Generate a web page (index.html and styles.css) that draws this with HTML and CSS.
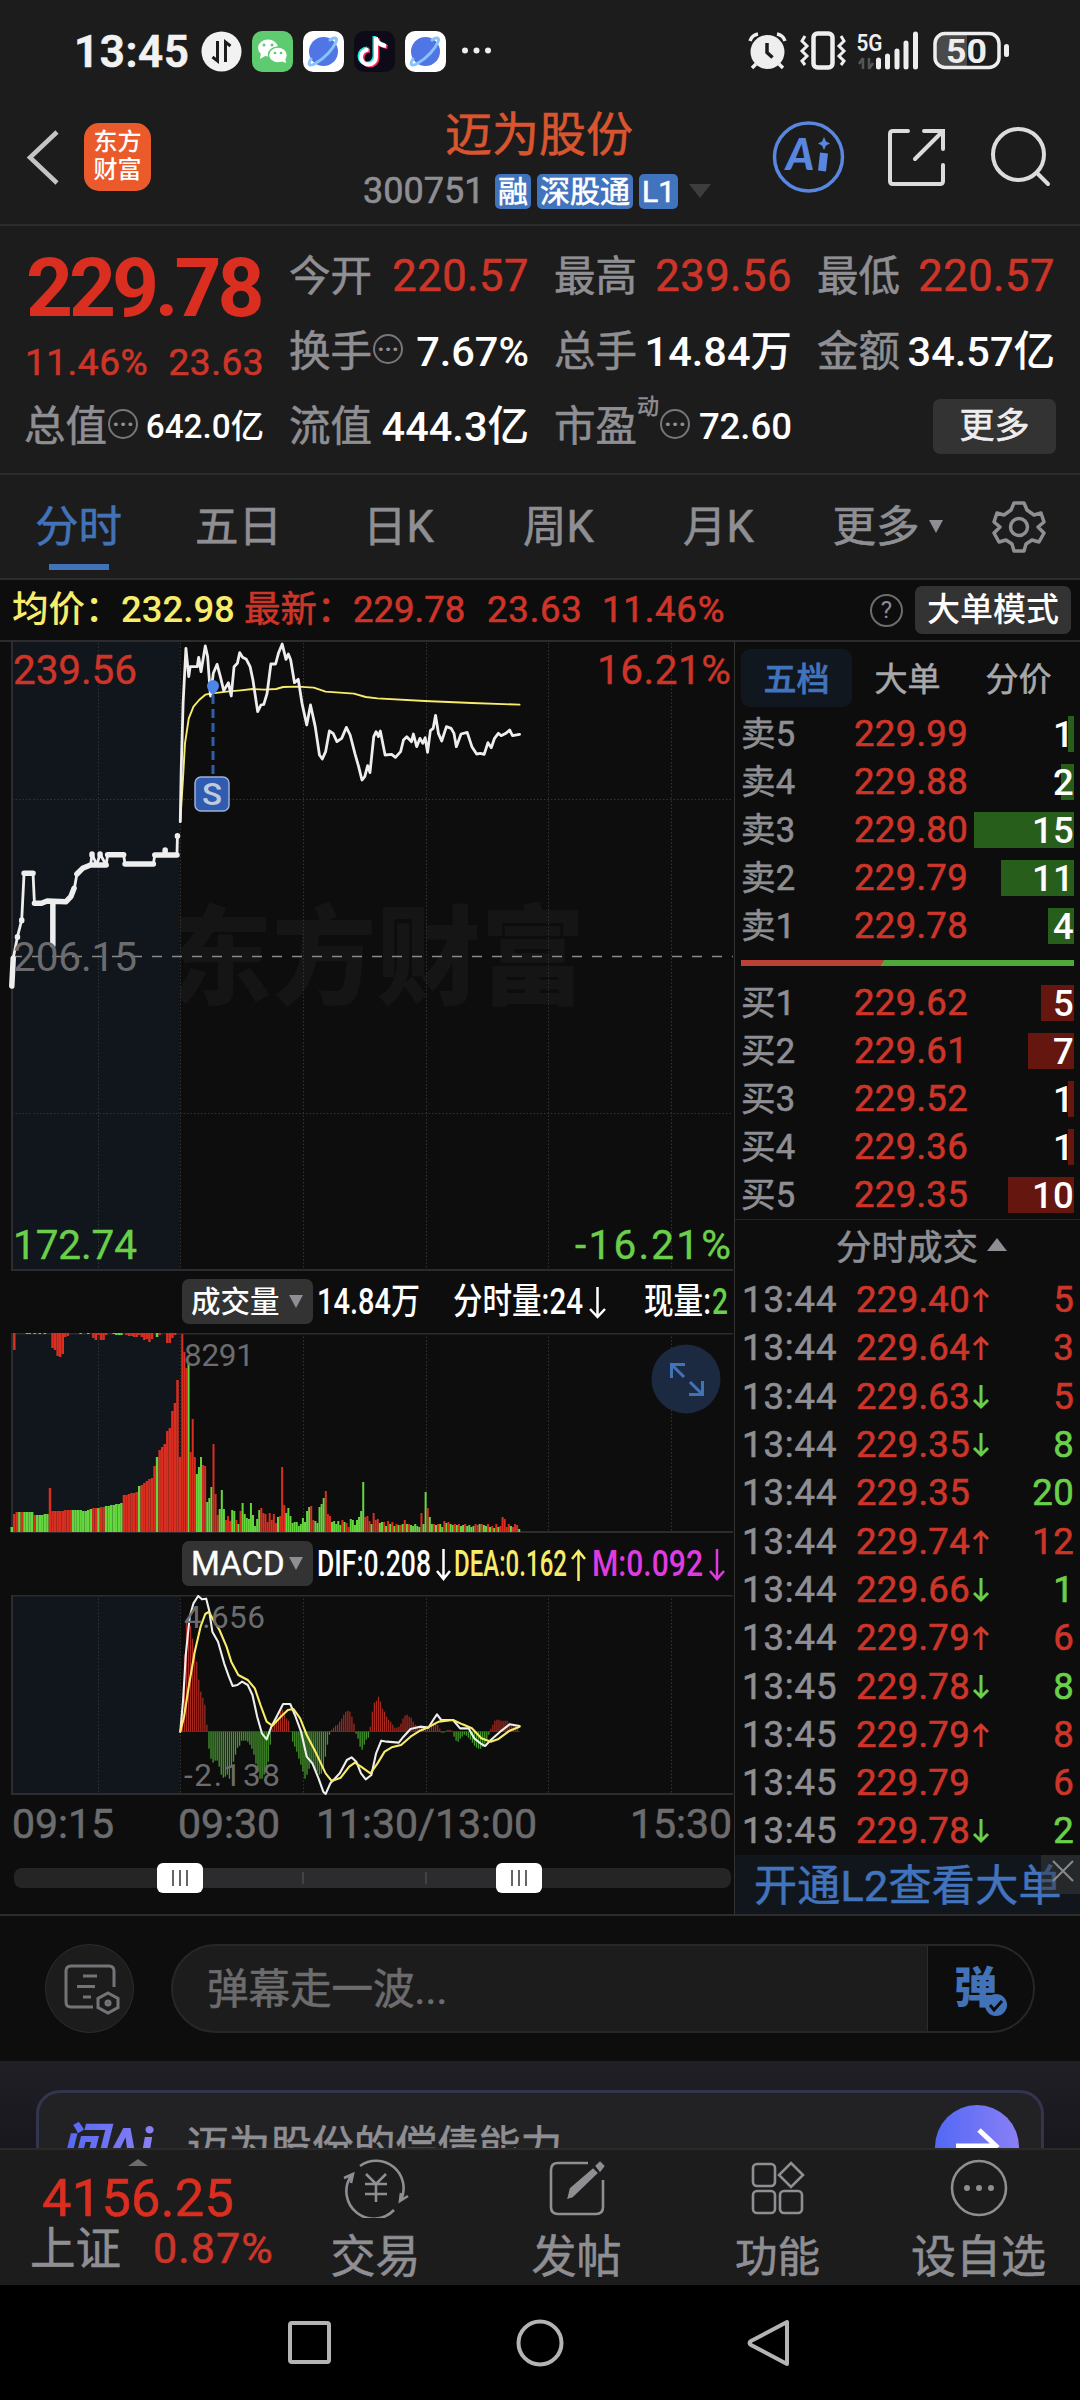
FILE: index.html
```html
<!DOCTYPE html>
<html lang="zh-CN">
<head>
    <meta charset="UTF-8">
    <title>迈为股份 300751</title>
    <link rel="stylesheet" href="styles.css">
</head>
<body>
    <!-- status bar -->
    <div class="status">
        <span class="clock">13:45</span>
        <svg class="apps" width="300" height="44" viewBox="200 30 300 44">
            <circle cx="221.500" cy="51.500" r="20" fill="#f2f2f2"/>
            <path d="M217.500 41v20l-5-4M225.500 62V42l5 4" stroke="#1c1c1c" stroke-width="3" fill="none"/>
            <rect x="252" y="31" width="41" height="41" rx="10" fill="#5fcb71"/>
            <ellipse cx="268" cy="48" rx="10" ry="8.500" fill="#fff"/>
            <path d="M261 53l-1 6 7-4z" fill="#fff"/>
            <ellipse cx="278" cy="55" rx="9.500" ry="8" fill="#fff" stroke="#5fcb71" stroke-width="1.500"/>
            <path d="M281 61l5 2-1-6z" fill="#fff"/>
            <g fill="#5fcb71"><circle cx="264" cy="45" r="1.500"/><circle cx="272" cy="45" r="1.500"/><circle cx="275" cy="53" r="1.300"/><circle cx="281" cy="53" r="1.300"/></g>
            <g id="planet">
                <rect x="303" y="31" width="41" height="41" rx="10" fill="#fff"/>
                <circle cx="323.500" cy="51.500" r="14.500" fill="#4f76e4"/>
                <path d="M311 59c-4 6-1 8 5 4 9-5 17-14 20-21 2-5-2-5-6-2" stroke="#8ac3fb" stroke-width="3" fill="none" stroke-linecap="round"/>
            </g>
            <rect x="354" y="31" width="41" height="41" rx="10" fill="#0d0b17"/>
            <g fill="none" stroke-width="4">
                <path d="M376 37v20a7.500 7.500 0 1 1-7.500-7.500M376 38c1 5 4 7 10 8" stroke="#25e5e0" transform="translate(-1.500 -1)"/>
                <path d="M376 37v20a7.500 7.500 0 1 1-7.500-7.500M376 38c1 5 4 7 10 8" stroke="#f43560" transform="translate(1.500 1)"/>
                <path d="M376 37v20a7.500 7.500 0 1 1-7.500-7.500M376 38c1 5 4 7 10 8" stroke="#fff"/>
            </g>
            <use href="#planet" x="102"/>
            <g fill="#eee"><circle cx="465" cy="50.500" r="3"/><circle cx="476.500" cy="50.500" r="3"/><circle cx="488" cy="50.500" r="3"/></g>
        </svg>
        <svg class="signals" width="264" height="44" viewBox="747 30 264 44">
            <circle cx="767.500" cy="52" r="17" fill="#eee"/>
            <path d="M767 43v9.500l5.500 5" stroke="#1c1c1c" stroke-width="3.500" fill="none"/>
            <path d="M750 41q2-6 8-7M785 41q-2-6-8-7M756 64l-4 4M779 64l4 4" stroke="#eee" stroke-width="3.500" fill="none"/>
            <rect x="813.500" y="33.500" width="19" height="34" rx="4" stroke="#eee" stroke-width="4.500" fill="none"/>
            <path d="M805 36l-3 5 5 5-5 5 5 5-5 5 3 4M841 36l3 5-5 5 5 5-5 5 5 5-3 4" stroke="#eee" stroke-width="3" fill="none"/>
            <text x="856.500" y="51" class="net" textLength="26" lengthAdjust="spacingAndGlyphs">5G</text>
            <path d="M863 58v11M863 58l-4 6M869 69v-11M869 69l4-6" stroke="#555" stroke-width="2.500" fill="none"/>
            <path d="M878.500 60v7M887.500 56v11M897 51v16M906 43v24M915.500 34v33" stroke="#eee" stroke-width="5" stroke-linecap="round"/>
            <path d="M967 34h-21q-10 0-10 10v14q0 10 10 10h21z" fill="#4a4a4a"/>
            <rect x="935" y="33.500" width="64" height="34" rx="10" fill="none" stroke="#eee" stroke-width="3.500"/>
            <rect x="1004" y="44" width="5" height="13" rx="2.500" fill="#eee"/>
            <text x="946" y="63" class="batt" textLength="41" lengthAdjust="spacingAndGlyphs">50</text>
        </svg>
    </div>

    <!-- title -->
    <div class="header">
        <div class="header-left">
            <svg width="34" height="60" viewBox="26 127 34 60"><path d="M57 132L30 157.500 57 183" stroke="#c4c4c4" stroke-width="4.500" fill="none"/></svg>
            <div class="logo">东方<br>财富</div>
        </div>
        <div class="header-mid">
            <div class="name">迈为股份</div>
            <div class="code">
                <span class="num">300751</span>
                <span class="tag">融</span>
                <span class="tag">深股通</span>
                <span class="tag">L1</span>
                <i class="down-dark"></i>
            </div>
        </div>
        <svg class="header-icons" width="290" height="80" viewBox="770 117 290 80" fill="none" stroke="#dcdcdc" stroke-width="4" stroke-linecap="round">
            <circle cx="808.500" cy="157" r="34" stroke="#5987df" stroke-width="3.500"/>
            <text x="786" y="170" class="ai-icon">A</text>
            <path d="M824 153l-2 18" stroke="#5987df" stroke-width="8" stroke-linecap="butt"/>
            <path d="M824 137l2 4.500 4 2-4 2-2 4.500-2-4.500-4-2 4-2z" fill="#5987df" stroke="none"/>
            <path d="M908 131h-15q-3 0-3 3v47q0 3 3 3h47q3 0 3-3v-16M924 131h19v18M943 131l-28 28"/>
            <circle cx="1018.500" cy="154.500" r="25.500"/>
            <path d="M1037 173l11 11"/>
        </svg>
    </div>

    <!-- quote -->
    <div class="quote">
        <div class="q-first">
            <div class="price">229.78</div>
            <div class="change"><span>11.46%</span><span>23.63</span></div>
        </div>
        <div class="q"><b>今开</b><em class="up">220.57</em></div>
        <div class="q"><b>最高</b><em class="up">239.56</em></div>
        <div class="q"><b>最低</b><em class="up">220.57</em></div>
        <div class="q"><b>换手</b><i class="dots">···</i><em>7.67%</em></div>
        <div class="q"><b>总手</b><em>14.84万</em></div>
        <div class="q"><b>金额</b><em>34.57亿</em></div>
        <div class="q"><b>总值</b><i class="dots">···</i><em class="small">642.0亿</em></div>
        <div class="q"><b>流值</b><em>444.3亿</em></div>
        <div class="q"><b>市盈</b><sup>动</sup><i class="dots">···</i><em class="mid">72.60</em></div>
        <div class="q"><button class="more">更多</button></div>
    </div>

    <div class="tabs">
        <div class="tab active">分时</div>
        <div class="tab">五日</div>
        <div class="tab">日K</div>
        <div class="tab">周K</div>
        <div class="tab">月K</div>
        <div class="tab last">更多<i></i></div>
        <svg width="120" height="60" viewBox="-59 -30 120 60" fill="none" stroke="#8e8e93" stroke-width="3.500" stroke-linejoin="round">
            <path d="M-5-24H5L8-17 15-12 22-14 25-5 19 0 25 6 20 15 13 13 7 17 5 24H-5L-7 17-13 13-20 15-25 6-19 0-25-5-22-14-15-12-8-17z"/>
            <circle r="8.500"/>
        </svg>
    </div>

    <div class="info">
        <span class="avg">均价：</span><span class="avg n1">232.98</span>
        <span class="up n2">最新：</span><span class="up n3">229.78</span><span class="up n4">23.63</span><span class="up n5">11.46%</span>
        <span class="help">?</span>
        <button class="bigmode">大单模式</button>
    </div>

    <div class="panel">
        <div class="charts">
            <svg width="735" height="630" viewBox="0 642 735 630">
                <rect x="12" y="642" width="168" height="628" fill="#11161d"/>
                <text x="168" y="996" class="watermark" textLength="417" lengthAdjust="spacingAndGlyphs">东方财富</text>
                <path class="grid" d="M98.500 643v626M180.500 643v626M303.500 643v626M426.500 643v626M548.500 643v626M671.500 643v626M12 799.500h721M12 1113.500h721"/>
                <path class="frame" d="M12 642v628h721"/>
                <path d="M12 956.500h721" stroke="#8a8a8a" stroke-width="1.500" stroke-dasharray="10 10"/>
                <g class="lines" transform="translate(0 570) scale(.4719 .33333)">
                    <polyline class="ln w3" points="25,1248 28,1165 37,1100 46,1050 51,910 70,910 73,1000 90,1000 100,992 112,995 112,1130 112,995 140,995 150,980 157,960 163,912 175,895 192,885 195,852 205,885 212,852 225,885 228,855 262,855 265,882 325,882 328,855 348,853 350,838 352,855 375,855 376,797"/>
                    <path class="ln w5" d="M25 1248L28 1165M37 1100v2M46 1050v2M51 910H70M73 1000H88L100 993 140 995 150 980 157 955M112 1000V1125M163 912L175 895 192 885H225M195 852v4M212 852v4M228 854H262M265 882H325M328 855H375M350 840v5M376 797v2"/>
                    <polyline class="ln yellow" points="382,755 388,620 392,520 400,445 410,410 422,390 435,374 450,370 480,365 510,361 535,357 560,359 585,357 600,351 630,350 665,353 690,365 750,371 775,381 800,385 900,393 1000,399 1101,404"/>
                    <polyline class="ln" points="382,755 384,600 388,400 394,235 400,320 403,290 418,290 421,262 426,305 435,228 440,260 446,378 452,310 460,283 467,320 474,362 484,338 490,378 496,290 503,280 508,248 514,262 522,268 530,290 536,330 546,425 553,405 559,403 566,370 574,282 584,282 590,250 598,222 606,268 611,252 616,270 624,338 632,328 640,400 650,465 658,405 668,470 677,555 683,567 690,545 698,483 706,490 714,515 724,505 734,472 742,495 752,550 760,590 767,630 773,620 779,587 784,608 792,500 797,485 802,500 806,483 816,555 830,553 838,562 849,545 855,510 862,500 872,515 876,492 883,530 890,505 896,520 901,503 906,547 912,482 918,475 923,436 929,490 936,513 946,470 956,475 962,490 967,530 977,492 990,487 1000,530 1010,552 1018,550 1026,553 1034,518 1041,533 1048,505 1056,490 1062,497 1072,490 1080,480 1086,497 1101,493"/>
                </g>
                <path d="M213 695v81" stroke="#2f5cab" stroke-width="3" stroke-dasharray="9 5"/>
                <path d="M213 695q-6-5-6-9a6 6 0 0 1 12 0q0 4-6 9z" fill="#4c86ea"/>
                <rect x="195" y="777" width="34" height="34" rx="6" fill="#2f5cb0" stroke="#9db0d8" stroke-width="1.500"/>
                <text x="202" y="805" class="s-mark" textLength="20" lengthAdjust="spacingAndGlyphs">S</text>
                <text x="13" y="684" class="axis up" textLength="124">239.56</text>
                <text x="13" y="971" class="axis gray" textLength="124">206.15</text>
                <text x="13" y="1259" class="axis down" textLength="124">172.74</text>
                <text x="597" y="684" class="axis up" textLength="134">16.21%</text>
                <text x="575" y="1259" class="axis down" textLength="156">-16.21%</text>
            </svg>

            <div class="ind">
                <button><span>成交量</span><i></i></button>
                <svg width="420" height="45" viewBox="315 1279 420 45">
                    <text x="317" y="1314" fill="#fff" textLength="103" lengthAdjust="spacingAndGlyphs">14.84万</text>
                    <text x="453" y="1314" fill="#fff" textLength="130" lengthAdjust="spacingAndGlyphs">分时量:24</text>
                    <path d="M597.500 1287v30M590 1309l7.500 8 7.500-8" stroke="#fff"/>
                    <text x="644" y="1314" fill="#fff" textLength="67" lengthAdjust="spacingAndGlyphs">现量:</text>
                    <text x="712" y="1314" fill="#6ad04a" textLength="16" lengthAdjust="spacingAndGlyphs">2</text>
                </svg>
            </div>
            <svg width="735" height="201" viewBox="0 1333 735 201">
                <rect x="12" y="1333" width="168" height="199" fill="#11161d"/>
                <path class="grid" d="M98.500 1333v199M180.500 1333v199M303.500 1333v199M426.500 1333v199M548.500 1333v199M671.500 1333v199"/>
                <path class="frame" d="M12 1333.500h721M12 1333v199h721"/>
                <g id="volume"></g>
                <text x="184" y="1366" class="axis sm" textLength="70">8291</text>
                <circle cx="686" cy="1379" r="34.500" fill="#1b2a41"/>
                <path d="M671.500 1378v-13.500h13.500M672 1365l12 12M702.500 1381v13.500h-13.500M702 1394l-12-12" stroke="#4273b8" stroke-width="3" fill="none"/>
            </svg>

            <div class="ind">
                <button><span>MACD</span><i></i></button>
                <svg width="420" height="45" viewBox="315 1540 420 45">
                    <text x="317" y="1575" fill="#fff" textLength="114" lengthAdjust="spacingAndGlyphs">DIF:0.208</text>
                    <path d="M443.500 1548v30M437 1570l6.500 8 6.500-8" stroke="#fff"/>
                    <text x="454" y="1575" fill="#f8ec6b" textLength="113" lengthAdjust="spacingAndGlyphs">DEA:0.162</text>
                    <path d="M578.500 1580v-30M572 1558l6.500-8 6.500 8" stroke="#f8ec6b"/>
                    <text x="592" y="1575" fill="#df3be0" textLength="111" lengthAdjust="spacingAndGlyphs">M:0.092</text>
                    <path d="M717 1548v30M710 1570l7 8 7-8" stroke="#df3be0"/>
                </svg>
            </div>
            <svg width="735" height="201" viewBox="0 1595 735 201">
                <rect x="12" y="1595" width="168" height="199" fill="#11161d"/>
                <path class="grid" d="M98.500 1595v199M180.500 1595v199M303.500 1595v199M426.500 1595v199M548.500 1595v199M671.500 1595v199"/>
                <path class="frame" d="M12 1595.500h721M12 1595v199h721"/>
                <g id="macd"></g>
                <g class="lines thin" transform="translate(0 1540) scale(.4719 .33333)">
                    <polyline class="ln" points="382,575 388,480 394,340 402,230 410,190 420,168 428,178 437,176 443,210 450,275 462,305 475,370 485,410 493,438 503,435 513,425 525,435 535,465 545,530 555,580 565,598 575,560 590,520 600,492 615,492 625,525 638,575 650,650 662,670 675,715 685,755 690,762 700,730 720,700 735,660 745,652 755,665 765,700 775,718 787,705 797,640 808,602 820,605 845,608 855,590 870,567 890,560 908,563 918,540 926,523 935,540 960,540 975,565 993,565 1005,595 1020,612 1028,618 1040,600 1060,575 1080,553 1101,558"/>
                    <polyline class="ln yellow" points="382,575 390,530 400,440 412,340 425,260 435,222 443,215 452,240 465,270 480,320 490,365 505,405 525,420 540,445 552,495 565,545 577,557 595,530 610,510 622,507 636,535 650,585 670,640 690,700 703,723 722,713 740,680 752,668 765,680 785,700 800,670 815,635 830,622 850,615 870,590 890,572 910,560 930,545 960,540 980,553 1000,565 1020,595 1040,605 1055,598 1080,572 1101,560"/>
                </g>
                <text x="184" y="1628" class="axis sm" textLength="81">4.656</text>
                <text x="184" y="1786" class="axis sm" textLength="96">-2.138</text>
            </svg>

            <div class="times"><span>09:15</span><span>09:30</span><span>11:30/13:00</span><span>15:30</span></div>
            <div class="slider">
                <div class="range"><i></i><i></i></div>
                <span class="knob k1"></span>
                <span class="knob k2"></span>
            </div>
        </div>

        <div class="book">
            <div class="book-tabs"><span class="on">五档</span><span>大单</span><span>分价</span></div>
            <div class="levels" id="sell"></div>
            <div class="ratio"></div>
            <div class="levels" id="buy"></div>
            <div class="deal-title">分时成交<i></i></div>
            <div class="deals" id="deals"></div>
            <div class="l2">开通L2查看大单<span class="close"><svg width="39" height="39" stroke="#8a8a8a" stroke-width="2"><path d="M12 6l20 20M32 6l-20 20"/></svg></span></div>
        </div>
    </div>

    <div class="danmu">
        <div class="round">
            <svg width="60" height="60" viewBox="62 1960 60 60" fill="none" stroke="#747478" stroke-width="3">
                <path d="M93 2007H71q-5 0-5-5v-31q0-5 5-5h38q5 0 5 5v16M83 1976h14M77 1986.500h18M83 1997h8"/>
                <path d="M108 1993l10 5.500v9l-10 5.500-10-5.500v-9z"/><circle cx="108" cy="2003" r="2"/>
            </svg>
        </div>
        <div class="input">
            <span>弹幕走一波...</span>
            <div class="send">弹<svg width="22" height="22"><circle cx="11" cy="11" r="11" fill="#4273b8"/><path d="M5 11l4 5 8-9" stroke="#0d0d0d" stroke-width="3" fill="none"/></svg></div>
        </div>
    </div>

    <div class="ask">
        <div class="ask-card">
            <span class="ask-logo">问Ai</span>
            <span class="ask-text">迈为股份的偿债能力</span>
            <span class="go"><svg width="84" height="84"><path d="M21 41h40M44 25l17 16-17 16" stroke="#fff" stroke-width="5" fill="none"/></svg></span>
        </div>
    </div>

    <div class="bottom">
        <div class="index">
            <i></i>
            <div class="idx-num">4156.25</div>
            <div class="idx-row"><span>上证</span><em>0.87%</em></div>
        </div>
        <div class="item">
            <svg width="70" height="60" viewBox="-35 -30 70 60">
                <path d="M-16-22A27.500 27.500 0 0 1 25 12M32 8l-8 5 1-8M18 22A27.500 27.500 0 0 1-25-12M-32-10l9-4-2 9M-10-14L0-4 10-14M0-4V14M-11-4H11M-11 6H11"/>
            </svg>
            <span>交易</span>
        </div>
        <div class="item">
            <svg width="70" height="60" viewBox="-35 -30 70 60">
                <path d="M11-25H-19q-7 0-7 7V19q0 7 7 7H19q7 0 7-7V-8"/><path d="M-8 9L-6 1 16-18 19-15-5 8zM20-22l3-3 3 3-3 4z" fill="#8e8e93"/>
            </svg>
            <span>发帖</span>
        </div>
        <div class="item fn">
            <svg width="70" height="60" viewBox="-35 -30 70 60">
                <rect x="-25" y="-24" width="22" height="22" rx="4"/><rect x="-25" y="3" width="22" height="22" rx="4"/><rect x="2" y="3" width="22" height="22" rx="4"/><path d="M13-25l12 12-12 12-12-12z"/>
            </svg>
            <span>功能</span>
        </div>
        <div class="item">
            <svg width="70" height="60" viewBox="-35 -30 70 60">
                <circle r="27"/><g fill="#8e8e93" stroke="none"><circle cx="-12" r="3"/><circle r="3"/><circle cx="12" r="3"/></g>
            </svg>
            <span>设自选</span>
        </div>
    </div>

    <div class="navbar">
        <svg width="1080" height="116" viewBox="0 2284 1080 116" fill="none" stroke="#b4b4b4" stroke-width="4">
            <rect x="290" y="2322" width="39" height="39" rx="2"/>
            <circle cx="540" cy="2342" r="21.500"/>
            <path d="M787 2321v42L751 2344q-3-2 0-4z" stroke-linejoin="round"/>
        </svg>
    </div>

    <script src="main.js"></script>
</body>
</html>
```

FILE: styles.css
```css
* {
    box-sizing: border-box;
}
body {
    margin: 0;
    width: 1080px;
    height: 2400px;
    overflow: hidden;
    background: #0d0d0d;
    color: #8e8e93;
    font-family: Roboto, "Noto Sans CJK SC", sans-serif;
    -webkit-text-stroke: 0.6px;
}
svg {
    display: block;
    flex: none;
}
svg text {
    -webkit-text-stroke: 0;
}
em, i {
    font-style: normal;
}
b {
    font-weight: 400;
}
button {
    border: none;
    padding: 0;
    font-family: inherit;
    color: #fff;
    background: #333;
    border-radius: 7px;
}
.up {
    color: #cd3529;
    fill: #cd3529;
}
.down {
    color: #6ad04a;
    fill: #6ad04a;
}

/* status bar */
.status {
    height: 100px;
    padding: 30px 69px 0 74px;
    display: flex;
    background: #1c1c1c;
}
.clock {
    width: 126px;
    font-size: 44px;
    line-height: 44px;
    font-weight: 600;
    letter-spacing: 0.600px;
    color: #f2f2f2;
}
.signals {
    margin-left: auto;
}
.net {
    font-size: 24px;
    font-weight: 600;
    fill: #eee;
}
.batt {
    font-size: 34px;
    font-weight: 700;
    fill: #eee;
}

/* header */
.header {
    height: 126px;
    padding: 0 20px 0 26px;
    display: flex;
    background: #1c1c1c;
    border-bottom: 2px solid #2c2c2e;
}
.header-left {
    width: 337px;
    padding-top: 23px;
    display: flex;
    gap: 24px;
}
.header-left svg {
    margin-top: 4px;
}
.logo {
    width: 67px;
    height: 68px;
    border-radius: 15px;
    background: #ea5a2b;
    color: #fff;
    font-size: 24px;
    line-height: 28px;
    font-weight: 500;
    text-align: center;
    padding-top: 5px;
    -webkit-text-stroke: 0;
}
.header-mid {
    width: 352px;
}
.name {
    height: 68px;
    line-height: 69px;
    font-size: 47px;
    color: #d8552f;
    padding-left: 82px;
}
.code {
    display: flex;
    align-items: center;
    gap: 6px;
    height: 46px;
}
.code .num {
    width: 126px;
    font-size: 36px;
}
.tag {
    height: 35px;
    line-height: 35px;
    padding: 0 3px;
    border-radius: 5px;
    background: #4273bd;
    color: #fff;
    font-size: 30px;
}
.down-dark {
    margin-left: 5px;
    border: 11px solid transparent;
    border-top: 14px solid #3d3d3d;
    border-bottom: 0;
}
.header-icons {
    margin: 17px 0 0 auto;
}
.ai-icon {
    font-family: Lato, sans-serif;
    font-size: 43px;
    font-weight: 900;
    font-style: italic;
    fill: #5987df;
    stroke: none;
}

/* quote */
.quote {
    height: 249px;
    padding: 13px 25px 0;
    display: grid;
    grid-template-columns: 239px 239px 237px 237px;
    grid-template-rows: 75px 75px 75px;
    column-gap: 26px;
    background: #1c1c1c;
    border-bottom: 2px solid #2c2c2e;
}
.q-first {
    grid-row: span 2;
    color: #d92e20;
}
.price {
    height: 96px;
    line-height: 98px;
    font-size: 82px;
    font-weight: 700;
    letter-spacing: -4.100px;
    padding-left: 1px;
    -webkit-text-stroke: 0;
}
.change {
    display: flex;
    justify-content: space-between;
    font-size: 37px;
    line-height: 56px;
    letter-spacing: 0.500px;
    color: #cd3529;
}
.q {
    display: flex;
    align-items: center;
    white-space: nowrap;
}
.q b {
    margin-left: -1px;
    font-size: 41.500px;
    line-height: 75px;
}
.q em {
    margin-left: auto;
    font-size: 41.500px;
    font-weight: 500;
    line-height: 75px;
    color: #fff;
    -webkit-text-stroke: 0;
}
.q em.up {
    font-size: 43.500px;
    font-weight: 400;
    letter-spacing: 0.500px;
    color: #cd3529;
    -webkit-text-stroke: 0.600px;
}
.q em.small {
    font-size: 33.300px;
}
.q em.mid {
    font-size: 36.500px;
}
.q sup {
    font-size: 22px;
    line-height: 24px;
    align-self: flex-start;
    margin-top: 6px;
}
.dots {
    width: 30px;
    height: 30px;
    margin: 0 0 6px 1px;
    border: 2px solid #77777b;
    border-radius: 50%;
    font-size: 24px;
    font-weight: 700;
    line-height: 26px;
    text-align: center;
    -webkit-text-stroke: 0;
}
.more {
    margin: 0 -1px 0 auto;
    width: 123px;
    height: 55px;
    font-size: 35px;
    line-height: 50px;
    color: #eee;
}

/* period tabs */
.tabs {
    height: 105px;
    display: flex;
    align-items: center;
    background: #1c1c1c;
    border-bottom: 2px solid #2c2c2e;
}
.tab {
    width: 160px;
    height: 103px;
    line-height: 106px;
    font-size: 43.500px;
    text-align: center;
    padding-right: 3px;
}
.tab.active {
    color: #4273b8;
    background: linear-gradient(#4273b8, #4273b8) 49px 89px / 60px 6px no-repeat;
}
.tab.last {
    padding: 0 0 0 15px;
    white-space: nowrap;
}
.tab i {
    display: inline-block;
    margin-left: 9px;
    vertical-align: 9px;
    border: 7.500px solid transparent;
    border-top: 13px solid #8e8e93;
    border-bottom: 0;
}

.info {
    height: 62px;
    padding-left: 12px;
    display: flex;
    align-items: center;
    font-size: 36.500px;
    line-height: 60px;
    white-space: nowrap;
    border-bottom: 2px solid #2c2c2e;
}
.info .avg {
    width: 109px;
    color: #f8ec6b;
    font-weight: 500;
    -webkit-text-stroke: 0;
}
.info .avg.n1 {
    width: 123px;
}
.info .n2 {
    width: 109px;
}
.info .n3 {
    width: 134px;
}
.info .n4 {
    width: 115px;
}
.info .n5 {
    width: 268px;
}
.info .n4,
.info .n5 {
    letter-spacing: 0.800px;
}
.help {
    width: 33px;
    height: 33px;
    line-height: 29px;
    border: 2px solid #6d6d70;
    border-radius: 50%;
    font-size: 24px;
    text-align: center;
    -webkit-text-stroke: 0;
}
.bigmode {
    margin-left: 12px;
    width: 156px;
    height: 48px;
    font-size: 33px;
    line-height: 46px;
    font-weight: 500;
    -webkit-text-stroke: 0;
}

/* charts */
.panel {
    height: 1274px;
    display: flex;
    border-bottom: 2px solid #2c2c2e;
}
.charts {
    width: 735px;
    border-right: 1px solid #333;
}
.grid {
    fill: none;
    stroke: #333;
    stroke-width: 1;
    stroke-dasharray: 1.500 2;
}
.frame {
    fill: none;
    stroke: #2c2c2e;
    stroke-width: 2;
}
.ln {
    fill: none;
    stroke: #eee;
    stroke-width: 2.800;
    stroke-linejoin: round;
    stroke-linecap: round;
    vector-effect: non-scaling-stroke;
}
.ln.w5 {
    stroke-width: 5.500;
}
.ln.yellow {
    stroke: #f8ec6b;
    stroke-width: 1.900;
}
.thin .ln {
    stroke-width: 2.100;
}
.watermark {
    font-size: 108px;
    font-weight: 900;
    fill: #151515;
}
.s-mark {
    font-size: 32px;
    font-weight: 500;
    fill: #c0cadd;
}
.axis {
    font-size: 40.500px;
    stroke-width: 0.400;
}
.axis.up {
    stroke: #cd3529;
}
.axis.down {
    stroke: #6ad04a;
}
.axis.gray {
    fill: #6c6c6e;
}
.axis.sm {
    font-size: 31.500px;
    fill: #6c6c6e;
}
.ind {
    height: 61px;
    padding: 7px 0 0 182px;
    display: flex;
    gap: 2px;
}
.ind button {
    width: 131px;
    height: 45px;
    flex: none;
    display: flex;
    align-items: center;
    padding-left: 9px;
    gap: 9px;
    font-size: 29.500px;
    line-height: 40px;
    font-weight: 500;
    white-space: nowrap;
    -webkit-text-stroke: 0;
}
.ind button span {
    width: 89px;
    text-align: left;
}
.ind + svg + .ind button {
    font-size: 33px;
    font-weight: 400;
    -webkit-text-stroke: 0.400px;
}
.ind i {
    border: 7.500px solid transparent;
    border-top: 13px solid #8e8e93;
    border-bottom: 0;
}
.ind text {
    font-size: 36px;
    font-weight: 500;
}
.ind path {
    fill: none;
    stroke-width: 2.500;
}
.times {
    height: 56px;
    display: flex;
    padding: 0 2px 0 12px;
    font-size: 41px;
    line-height: 57px;
    color: #6c6c6e;
}
.times span:nth-child(1) {
    width: 166px;
}
.times span:nth-child(2) {
    width: 138px;
}
.times span:nth-child(4) {
    margin-left: auto;
}
.slider {
    position: relative;
    margin: 16px 3px 0 14px;
    height: 20px;
    border-radius: 8px;
    background: #252526;
}
.range {
    width: 339px;
    height: 20px;
    margin-left: 166px;
    padding: 4px 0 0 122px;
    display: flex;
    gap: 121px;
    background: #2c2c2e;
}
.range i {
    width: 2px;
    height: 12px;
    background: #434345;
}
.knob {
    position: absolute;
    top: -5px;
    width: 46px;
    height: 30px;
    border-radius: 6px;
    background: repeating-linear-gradient(90deg, #666 0 2px, #fff 2px 7px) 15px 7px / 16px 16px no-repeat, #fff;
}
.k1 {
    left: 143px;
}
.k2 {
    left: 482px;
}

/* order book */
.book {
    width: 345px;
    padding-top: 7px;
}
.book-tabs {
    display: flex;
    margin: 0 6px;
}
.book-tabs span {
    width: 111px;
    height: 58px;
    line-height: 61px;
    font-size: 33px;
    text-align: center;
    color: #a8a8aa;
}
.book-tabs .on {
    color: #4273bd;
    font-weight: 500;
    background: #11171f;
    border-radius: 9px;
}
.levels {
    padding: 0 6px;
    margin-top: 3px;
}
.level {
    height: 48px;
    display: flex;
    align-items: center;
    font-size: 36.500px;
    letter-spacing: 0.300px;
    line-height: 48px;
}
.level .lv {
    width: 113px;
    font-size: 34.500px;
}
.level .qty {
    position: relative;
    flex: 1;
    height: 36px;
    line-height: 37px;
    text-align: right;
    color: #fff;
    font-weight: 500;
    -webkit-text-stroke: 0;
}
.level .qty i {
    position: absolute;
    right: 0;
    top: 0;
    height: 36px;
    z-index: -1;
}
#sell .qty i {
    background: #285e1b;
}
#buy .qty i {
    background: #65160f;
}
.ratio {
    height: 6px;
    margin: 10px 6px 0;
    background: linear-gradient(120deg, #bb4036 42.500%, #51a83a 42.500%);
}
#buy {
    margin-top: 13px;
}
.deal-title {
    height: 57px;
    border-top: 1px solid #262626;
    display: flex;
    align-items: center;
    padding-left: 101px;
    gap: 9px;
    font-size: 35.500px;
    line-height: 54px;
}
.deal-title i {
    margin-bottom: 8px;
    border: 10.500px solid transparent;
    border-bottom: 13px solid #8e8e93;
    border-top: 0;
}
.deals {
    height: 579px;
}
.deal {
    height: 48.300px;
    display: flex;
    align-items: center;
    padding: 0 6px 0 7px;
    font-size: 36.500px;
    letter-spacing: 0.300px;
    line-height: 48px;
}
.deal .t {
    width: 114px;
    letter-spacing: 0.900px;
}
.deal .p {
    width: 116px;
}
.deal svg {
    fill: none;
    stroke-width: 3;
}
.deal .v {
    margin-left: auto;
}
.l2 {
    position: relative;
    height: 59px;
    line-height: 63px;
    padding-left: 19px;
    font-size: 43px;
    letter-spacing: 0.300px;
    white-space: nowrap;
    color: #4273bd;
    background: #11161d;
}
.close {
    position: absolute;
    right: 0;
    top: 0;
    width: 39px;
    height: 39px;
    background: rgba(60, 60, 60, 0.5);
}

/* danmu input */
.danmu {
    height: 145px;
    padding: 28px 45px 0;
    display: flex;
    gap: 37px;
}
.round {
    width: 89px;
    height: 89px;
    border: 1px solid #2c2c2e;
    border-radius: 50%;
    background: #1c1c1c;
    padding: 15px 16px;
}
.input {
    flex: 1;
    height: 89px;
    display: flex;
    justify-content: space-between;
    overflow: hidden;
    border: 2px solid #272727;
    border-radius: 45px;
    background: #1c1c1c;
    padding-left: 34px;
    font-size: 41.500px;
    line-height: 87px;
    color: #6c6c6e;
}
.send {
    width: 106px;
    display: flex;
    border-left: 1px solid #2c2c2e;
    background: #0d0d0d;
    color: #4273b8;
    font-size: 43px;
    font-weight: 900;
    line-height: 84px;
    padding-left: 26px;
    -webkit-text-stroke: 0;
}
.send svg {
    margin: 48px 0 0 -12px;
}

/* ask ai */
.ask {
    height: 87px;
    overflow: hidden;
    padding: 29px 36px 0;
    background: linear-gradient(#1f1f25, #17171d);
}
.ask-card {
    height: 120px;
    display: flex;
    padding: 12px 22px 0 22px;
    border: 3px solid #33354f;
    border-radius: 24px;
    background: #222225;
    white-space: nowrap;
}
.ask-logo {
    width: 126px;
    font-size: 46px;
    line-height: 80px;
    font-weight: 900;
    font-style: italic;
    letter-spacing: 1.500px;
    color: transparent;
    background: linear-gradient(90deg, #5267f5, #8f83f3 100px);
    -webkit-background-clip: text;
    background-clip: text;
    -webkit-text-stroke: 0;
}
.ask-text {
    font-size: 41.700px;
    line-height: 83px;
}
.go {
    margin-left: auto;
    width: 84px;
    height: 84px;
    border-radius: 50%;
    background: linear-gradient(90deg, #5268f5, #8a80f5);
}

/* bottom bar */
.bottom {
    height: 137px;
    display: flex;
    background: #1c1c1c;
    border-top: 2px solid #2a2a2a;
}
.index {
    width: 275px;
    padding: 9px 0 0 30px;
}
.index i {
    display: block;
    width: 0;
    margin-left: 98px;
    border: 10px solid transparent;
    border-bottom: 7px solid #6c6c6e;
    border-top: 0;
}
.idx-num {
    margin: 4px 0 0 12px;
    font-size: 52.500px;
    line-height: 56px;
    letter-spacing: 0.200px;
    color: #d92e20;
}
.idx-row {
    display: flex;
    gap: 32px;
    font-size: 45.500px;
    line-height: 48px;
}
.idx-row em {
    font-size: 43px;
    line-height: 44px;
    letter-spacing: 1.100px;
    color: #cd3529;
}
.item {
    width: 201px;
    padding-top: 8px;
    display: flex;
    flex-direction: column;
    align-items: center;
    font-size: 45px;
    line-height: 79px;
}
.item.fn span {
    font-size: 42.500px;
}
.item svg {
    fill: none;
    stroke: #8e8e93;
    stroke-width: 2.600;
}
.navbar {
    height: 116px;
    background: #000;
}
```

FILE: main.js
```js
// order book
var sell = [
    ['卖5', '229.99', 1, 6], ['卖4', '229.88', 2, 13], ['卖3', '229.80', 15, 100],
    ['卖2', '229.79', 11, 73], ['卖1', '229.78', 4, 26]
];
var buy = [
    ['买1', '229.62', 5, 33], ['买2', '229.61', 7, 46], ['买3', '229.52', 1, 6],
    ['买4', '229.36', 1, 6], ['买5', '229.35', 10, 66]
];

function levels(id, rows) {
    document.getElementById(id).innerHTML = rows.map(function (r) {
        return '<div class="level"><span class="lv">' + r[0] + '</span><span class="up">' + r[1] +
            '</span><span class="qty"><i style="width:' + r[3] + 'px"></i>' + r[2] + '</span></div>';
    }).join('');
}
levels('sell', sell);
levels('buy', buy);

// time, price, direction, volume, side
var deals = [
    ['13:44', '229.40', 'u', 5, 'up'], ['13:44', '229.64', 'u', 3, 'up'], ['13:44', '229.63', 'd', 5, 'up'],
    ['13:44', '229.35', 'd', 8, 'down'], ['13:44', '229.35', '', 20, 'down'], ['13:44', '229.74', 'u', 12, 'up'],
    ['13:44', '229.66', 'd', 1, 'down'], ['13:44', '229.79', 'u', 6, 'up'], ['13:45', '229.78', 'd', 8, 'down'],
    ['13:45', '229.79', 'u', 8, 'up'], ['13:45', '229.79', '', 6, 'up'], ['13:45', '229.78', 'd', 2, 'down']
];
var arrows = {
    u: '<svg width="18" height="26" stroke="#d8392c"><path d="M9 25V3M2 10l7-7 7 7"/></svg>',
    d: '<svg width="18" height="26" stroke="#6ad04a"><path d="M9 1v22M2 16l7 7 7-7"/></svg>',
    '': ''
};
document.getElementById('deals').innerHTML = deals.map(function (d) {
    return '<div class="deal"><span class="t">' + d[0] + '</span><span class="p up">' + d[1] + '</span>' +
        arrows[d[2]] + '<span class="v ' + d[4] + '">' + d[3] + '</span></div>';
}).join('');

function rect(x, y, w, h, color) {
    return '<rect x="' + x.toFixed(2) + '" y="' + y.toFixed(2) + '" width="' + w + '" height="' + h.toFixed(2) + '" fill="' + color + '"/>';
}
var RED = '#d92e20', GREEN = '#66d63f';

// call auction volume, r/g + height
var auction = 'g5 r18 r20 g20 r20 g20 g20 g20 g20 r17 g17 g17 g17 g18 g18 r44 r21 r21 r21 r21 r21 r22 r22 r22 g22 g22 g22 g22 g21 g21 g22 g23 r24 r24 g24 r25 r25 g26 g26 g27 g27 g28 g28 g29 r37 r37 r38 r39 r39 r40 g46 r47 r49 r51 r53 r54 r66 g75 r82 r85 r88 r101 r104 r121 r129 r152 r75'.split(' ');
// one bar per minute
var minute = 'r198 r180 r164 g168 r80 r113 r75 g58 g65 g75 r67 r66 g30 g34 g45 r88 r38 r17 g23 g42 g23 r12 r16 r11 g22 g21 r12 g8 r21 g29 g18 g14 g13 g29 g17 g6 g13 g22 r24 r19 r18 r10 r19 r12 r18 r9 g15 r16 r65 r27 g19 g24 g16 g9 g10 g10 g6 g8 g14 g10 g21 g25 r26 r12 g11 g9 g25 g28 g34 r41 r18 r16 g10 g11 g8 g11 g7 r12 g10 r9 r5 g13 g12 g7 g12 g15 g21 g50 r15 r16 r11 g8 r19 r12 r13 g9 g10 r10 g6 r11 g8 r10 g6 r8 g7 r7 g8 r12 g8 r8 g7 g6 g8 g6 g5 r19 g8 g40 r24 g15 g8 r8 g7 r8 g8 g5 r11 g9 r10 g8 g7 r8 g7 r8 g6 g7 r8 g6 g7 g5 g6 r8 r7 g8 r8 g7 g6 r8 g5 r6 g4 r8 g5 r6 r15 r13 r5 r8 g6 r5 r8 r7 g3'.split(' ');
// unmatched volume hanging from the top: index, height
var unmatched = ['r1 17', 'g6 1', 'g7 1', 'g9 1', 'g11 1', 'g13 1', 'r16 15', 'r17 17', 'r18 23', 'r19 24', 'r20 21', 'r21 4', 'r22 3', 'g27 1', 'g30 1', 'r32 5', 'r33 7', 'r34 2', 'r35 7', 'r36 7', 'r37 2', 'g40 1', 'g41 2', 'g42 2', 'g43 2', 'r45 2', 'r46 3', 'r47 3', 'r48 4', 'r49 4', 'r50 2', 'r51 4', 'r52 7', 'r53 6', 'r54 9', 'r55 6', 'g57 4', 'r58 2', 'r61 10', 'r62 10', 'r63 5', 'r64 2'];

var out = '';
auction.forEach(function (b, i) {
    var h = +b.slice(1);
    out += rect(10.5 + i * 2.55, 1532 - h, 2.5, h, b[0] == 'r' ? RED : GREEN);
});
minute.forEach(function (b, i) {
    var h = +b.slice(1);
    out += rect(181.3 + i * 339 / minute.length, 1532 - h, 2, h, b[0] == 'r' ? RED : GREEN);
});
unmatched.forEach(function (s) {
    var p = s.slice(1).split(' ');
    out += rect(10.5 + p[0] * 2.55, 1333, 2.5, +p[1], s[0] == 'r' ? RED : GREEN);
});
document.getElementById('volume').innerHTML = out;

// macd histogram
var hist = [
    20, 77, 110, 110, 106, 93, 80, 70, 52, 40, 34, 27, 7, -17, -27, -31, -29, -29, -35, -43, -46, -45, -43, -47, -35, -30, -23, -16, -14, -9,
    -9, -9, -10, -13, -17, -23, -32, -40, -47, -47, -43, -38, -30, -13, 3, 8, 10, 14, 20, 22, 17, 13, 11, 0, -10, -15, -20, -27, -33,
    -40, -47, -43, -37, -32, -34, -38, -40, -43, -42, -36, -25, -13, -3, 2, 4, 6, 7, 10, 13, 17, 20, 21, 20, 15, 8, -2, -7, -15, -18, -13,
    -8, -6, 5, 20, 29, 31, 35, 30, 23, 20, 15, 12, 10, 7, 4, 4, 5, 8, 13, 16, 17, 15, 14, 10, 7, 6, 5, 4, 4, 3, 3, 3, 6, 9, 10, 7, 3, -1, -1, 1, 2, 2, 1,
    -5, -9, -10, -7, -5, -3, -4, -6, -8, -11, -14, -16, -17, -17, -15, -12, -8, -3, 3, 7, 11, 12, 12, 11, 11, 11, 11, 9, 7, 6, 6, 3
];
out = rect(180, 1731, 340, 1, '#5d211a');
hist.forEach(function (h, i) {
    var x = 181.8 + i * 337 / hist.length;
    out += h > 0 ? rect(x, 1731.7 - h, 1.2, h, '#ab2a20') : rect(x, 1731.7, 1.3, -h, '#44982c');
});
document.getElementById('macd').innerHTML = out;
```
